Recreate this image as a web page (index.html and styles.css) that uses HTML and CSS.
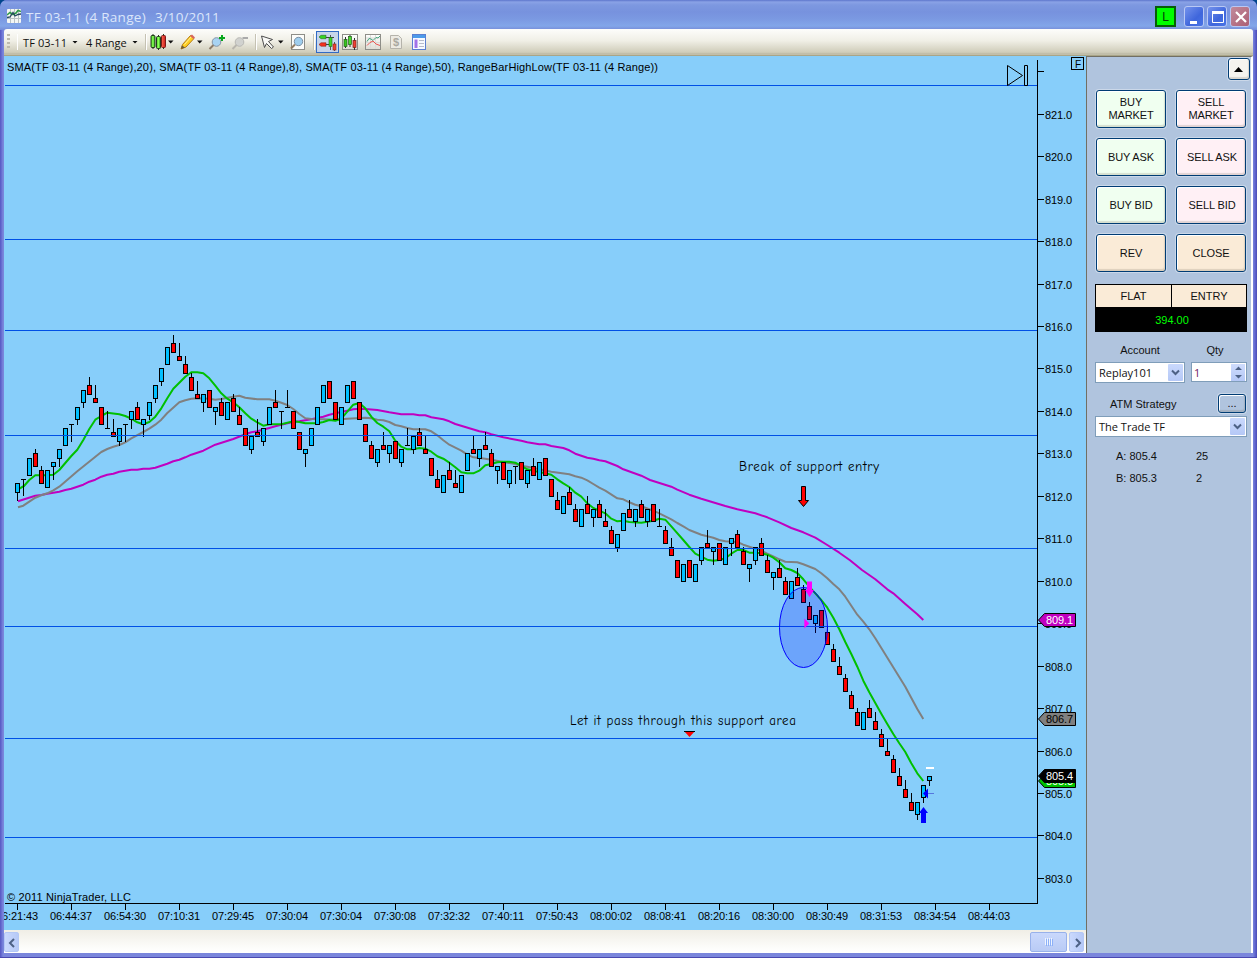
FILE: index.html
```html
<!DOCTYPE html>
<html lang="en">
<head>
<meta charset="utf-8">
<title>TF 03-11 (4 Range) 3/10/2011</title>
<link rel="stylesheet" href="styles.css">
</head>
<body>
<div class="window">
  <header class="titlebar">
    <svg class="app-icon" width="14" height="14" viewBox="0 0 14 14"><rect width="14" height="14" rx="1" fill="#f4f6f4"/><path d="M0 9.500H14M3.500 0V14M7.500 0V14M11.500 0V14" stroke="#b9c2c4"/><path d="M0 6L3 3.500L6 5.500L9 4L11 1.500L14 2.500" fill="none" stroke="#2e9a48" stroke-width="1.600"/><path d="M0 8.500L3 8L6 3.500L8 7L11 5.500L14 5" fill="none" stroke="#24485e" stroke-width="1.300"/></svg>
    <h1 class="title"><span>TF 03-11 (4 Range)</span><span>3/10/2011</span></h1>
    <span class="link-badge">L</span>
    <div class="win-buttons">
      <button class="win-btn"><svg width="20" height="20"><path d="M5 15.500H12" stroke="#fff" stroke-width="3"/></svg></button>
      <button class="win-btn"><svg width="20" height="20"><path d="M4.500 5V15.500H15.500V5" fill="none" stroke="#fff"/><path d="M4 5.500H16" stroke="#fff" stroke-width="3"/></svg></button>
      <button class="win-btn win-close"><svg width="20" height="20"><path d="M5 5L15 15M15 5L5 15" stroke="#fff" stroke-width="2.200"/></svg></button>
    </div>
  </header>

  <nav class="toolbar">
    <span class="grip"></span>
    <span class="sep"></span>
    <span class="pick pick-symbol">TF 03-11</span><i class="caret"></i>
    <span class="pick pick-range">4 Range</span><i class="caret"></i>
    <svg class="tools" width="290" height="24" viewBox="144 0 290 24">
      <defs>
        <linearGradient id="greenBar"><stop offset="0" stop-color="#3fd01f"/><stop offset=".5" stop-color="#8cff58"/><stop offset="1" stop-color="#1c9a10"/></linearGradient>
        <linearGradient id="redBar"><stop offset="0" stop-color="#ff6a50"/><stop offset="1" stop-color="#c81a1a"/></linearGradient>
        <linearGradient id="frame" x2="0" y2="1"><stop offset="0" stop-color="#fff"/><stop offset="1" stop-color="#deddd4"/></linearGradient>
      </defs>
      <path d="M146.500 4V20M256.500 4V20M314.500 4V20" stroke="#fff"/><path d="M145.500 4V20M255.500 4V20M313.500 4V20" stroke="#c5c2b3"/>
      <g stroke="#233a1c"><path d="M153 4V19M158.500 5V20M163.500 4V19"/><rect x="151" y="5.500" width="4" height="12" rx="1" fill="url(#greenBar)"/><rect x="156.500" y="6.500" width="4" height="12" rx="1" fill="url(#greenBar)"/><rect x="161.500" y="5.500" width="4" height="12" rx="1" fill="url(#redBar)" stroke="#7a1b17"/></g>
      <g fill="#111"><path d="M168 10.500H173.500L170.700 13.500ZM197 10.500H202.500L199.700 13.500ZM278 10.500H283.500L280.700 13.500Z"/></g>
      <path d="M181 19L182.500 14.500L190.500 5.500L194 8.500L186 17Z" fill="#ffcf23" stroke="#b37a12"/><path d="M190 6L192 4.500L195 7.500L193.500 9Z" fill="#d9665d"/><path d="M181 19L182 15.500L185 17.500Z" fill="#6a5b3d"/><path d="M184.500 14.500L191 7" stroke="#fff29a"/>
      <path d="M209.500 19L214 14.500" stroke="#8d7c68" stroke-width="2"/><circle cx="216.500" cy="12" r="4.300" fill="#a8d3f2" stroke="#8695a5"/><path d="M222 5V11M219 8H225" stroke="#08a71c" stroke-width="2"/>
      <path d="M232.500 19L237 14.500" stroke="#b8b5ad" stroke-width="2"/><circle cx="239.500" cy="12" r="4.300" fill="#d1d2cf" stroke="#b8b8b4"/><path d="M242.500 8H248" stroke="#aaa" stroke-width="2"/>
      <path d="M261.500 6L272.500 9.500L268.500 11.500L273.500 17L271.500 18.500L266.500 13.500L264.500 17.500Z" fill="#f8f8f5" stroke="#4d4d4d"/>
      <rect x="291.500" y="4.500" width="13" height="15" fill="#fcfcfa" stroke="#8e8e88"/><path d="M291 18.500L295 14.500" stroke="#927c62" stroke-width="2"/><circle cx="298.500" cy="11.500" r="4.200" fill="#9fceee" stroke="#7c91a5"/>
      <rect x="316.500" y="1.500" width="22" height="21" fill="#c7d5ea" stroke="#316ac5"/>
      <g stroke-width=".6"><path d="M319 7L321 5.300H326V8.700H321Z" fill="#36d322" stroke="#276e20"/><path d="M326 7.500H334" stroke="#404040" stroke-width="1"/><path d="M319 14.500L321 12.800H326V16.200H321Z" fill="#f8301e" stroke="#8b2017"/><path d="M326 14.500H330" stroke="#404040" stroke-width="1"/><path d="M330.500 5V20M334.500 12V21" stroke="#333" stroke-width=".8"/><rect x="329" y="7.500" width="3" height="9" fill="#3ed62a" stroke="#226e1b"/><rect x="333" y="14" width="3" height="6" fill="#ee4332" stroke="#8b2017"/></g>
      <rect x="342.500" y="4.500" width="15" height="15" fill="url(#frame)" stroke="#8e8e88"/><path d="M345.500 7V18M350 5V17M354.500 8V20" stroke="#333"/><rect x="344" y="9.500" width="3" height="7" fill="#39c421" stroke="#235f18" stroke-width=".7"/><rect x="348.500" y="6.500" width="3" height="8" fill="#48dc2e" stroke="#235f18" stroke-width=".7"/><rect x="353" y="10.500" width="3" height="7" fill="#ef4334" stroke="#762018" stroke-width=".7"/>
      <rect x="365.500" y="4.500" width="15" height="15" fill="url(#frame)" stroke="#8e8e88"/><path d="M366 8H380M366 12.500H380M370.500 5V19M375.500 5V19" stroke="#dcdcd8"/><path d="M367 11.500L369 8.500L371 9L373 10.500L376 7.500L378 8L380 6" fill="none" stroke="#3fa27c"/><path d="M367 15.500L370 12.500L373 11L376 14L380 15.500" fill="none" stroke="#ec5550"/>
      <path d="M390.500 5.500H398.500L401.500 8.500V18.500H390.500Z" fill="#eceae3" stroke="#b5b3ab"/><text x="393" y="16" font-size="11" font-weight="bold" fill="#aaa8a0">$</text>
      <rect x="412.500" y="4.500" width="13" height="15" fill="#f7faff" stroke="#5b7fd0"/><path d="M413 6.500H425" stroke="#4d9bea" stroke-width="3"/><path d="M416 9.500V18" stroke="#a273e8" stroke-width="3"/><path d="M419 10.500H424M419 13.500H424M419 16.500H424" stroke="#b7bccb"/>
    </svg>
  </nav>

  <main class="content">
    <section class="chart-pane">
      <svg id="chart" class="chart" width="1081" height="874" viewBox="4 56 1081 874"></svg>
      <div class="scrollbar">
        <button class="scroll-btn"><svg width="15" height="20"><path d="M9 6L5 10L9 14" fill="none" stroke="#4d6185" stroke-width="2"/></svg></button>
        <span class="scroll-track"></span>
        <span class="scroll-thumb"><i></i><i></i><i></i><i></i></span>
        <button class="scroll-btn"><svg width="15" height="20"><path d="M6 6L10 10L6 14" fill="none" stroke="#4d6185" stroke-width="2"/></svg></button>
      </div>
    </section>

    <aside class="panel">
      <div class="panel-top"><button class="xp-btn collapse"><svg width="10" height="5"><path d="M0 5L4.500 0L9 5Z"/></svg></button></div>
      <div class="orders">
        <button class="xp-btn buy">BUY<br>MARKET</button><button class="xp-btn sell">SELL<br>MARKET</button>
        <button class="xp-btn buy">BUY ASK</button><button class="xp-btn sell">SELL ASK</button>
        <button class="xp-btn buy">BUY BID</button><button class="xp-btn sell">SELL BID</button>
        <button class="xp-btn neutral">REV</button><button class="xp-btn neutral">CLOSE</button>
      </div>
      <div class="position">
        <span class="pos-cell">FLAT</span><span class="pos-cell">ENTRY</span>
        <span class="pnl">394.00</span>
      </div>
      <div class="labels"><span>Account</span><span>Qty</span></div>
      <div class="account-row">
        <div class="combo account">Replay101<span class="drop"><svg width="9" height="7"><path d="M1 1.500L4.500 5L8 1.500" fill="none" stroke="#4d6185" stroke-width="2"/></svg></span></div>
        <div class="combo qty">1<span class="spin"><svg width="7" height="15"><path d="M0 5L3.500 1.500L7 5ZM0 10L3.500 13.500L7 10Z" fill="#4d6185"/></svg></span></div>
      </div>
      <div class="atm-row"><span>ATM Strategy</span><button class="xp-btn more">...</button></div>
      <div class="combo strategy">The Trade TF<span class="drop"><svg width="9" height="7"><path d="M1 1.500L4.500 5L8 1.500" fill="none" stroke="#4d6185" stroke-width="2"/></svg></span></div>
      <div class="quotes"><span>A: 805.4</span><span>25</span><span>B: 805.3</span><span>2</span></div>
    </aside>
  </main>
</div>
<script src="chart.js"></script>
</body>
</html>
```

FILE: styles.css
```css
* { box-sizing: border-box; }
body { margin: 0; background: #00458c; font: 11px "Liberation Sans", Arial, sans-serif; color: #111; overflow: hidden; }
button { font: inherit; color: inherit; padding: 0; margin: 0; }
svg { display: block; }

.window {
  width: 1257px; height: 958px; display: flex; flex-direction: column;
  padding: 0 4px 4px; border-radius: 7px 7px 0 0;
  background: linear-gradient(90deg, #5658c0 0, #6064cc 1px, #7a86dc 3px, #7a86dc 4px, #7a86dc 1253px, #6066d0 1255px, #4a4cb4 1257px);
  border-bottom: 1px solid #4a48b0;
}

.titlebar {
  height: 30px; margin: 0 -4px; padding: 3px 7px 0 7px; display: flex; align-items: center;
  border-radius: 7px 7px 0 0;
  background: linear-gradient(#5d76cc 0, #8aa2e6 2px, #7d98e0 5px, #7792de 12px, #7b99e2 19px, #82a6e9 26px, #7c98e0 28px, #728cd8 30px);
}
.app-icon { margin: -1px 5px 0 0; }
.title { margin: 1px 0 0; display: flex; gap: 9px; flex: 1; font: 500 13.500px "Open Sans", sans-serif; color: #dbe6fb; }
.title span:first-child { width: 120px; letter-spacing: .28px; white-space: nowrap; }
.title span:last-child { letter-spacing: .1px; }
.link-badge { width: 21px; height: 21px; border: 2px solid #075d07; background: #0f0; display: grid; place-items: center; margin-right: 8px; color: #063b06; font-size: 12px; }
.win-buttons { display: flex; gap: 3px; }
.win-btn { width: 20px; height: 21px; border: 1px solid #b9c8f4; border-radius: 3px; background: linear-gradient(135deg, #7593ec, #3f66dc 60%, #4974e6); display: grid; place-items: center; overflow: hidden; }
.win-close { background: linear-gradient(135deg, #c18a9c, #ac5f74); }

.toolbar {
  height: 26px; display: flex; align-items: center; padding-left: 3px;
  background: linear-gradient(#fdfdfb, #f0efe6 45%, #cfccb9 90%, #c1beaa 92%);
  border-bottom: 1px solid #a9a587; border-radius: 3px 3px 0 0;
  font: 11px "Open Sans", Tahoma, sans-serif;
}
.grip { width: 3px; height: 16px; background: repeating-linear-gradient(#bdbaad 0 2px, transparent 2px 4px); }
.sep { width: 1px; height: 16px; margin: 0 5px 0 7px; background: #fff; }
.pick { white-space: nowrap; }
.pick-symbol { width: 44px; margin-right: 5px; letter-spacing: .1px; }
.pick-range { width: 40px; margin: 0 6px 0 8px; letter-spacing: -.05px; }
.caret { width: 6px; height: 3px; background: #111; clip-path: polygon(0 0, 100% 0, 50% 100%); }
.tools { margin-left: 6px; font-family: "Liberation Sans", sans-serif; }

.content { flex: 1; display: flex; }
.chart-pane { width: 1082px; display: flex; flex-direction: column; background: #87cefa; }
.chart text { font-family: "Liberation Sans", Arial, sans-serif; font-size: 11px; }
.chart .note { font-family: "Comic Sans MS", "Comic Neue", "Open Sans", sans-serif; font-size: 13px; }
.titlebar + .toolbar { margin-bottom: 0; height: 27px; flex: none; margin-top: -1px; }
.titlebar { height: 30px; flex: none; }

.scrollbar { height: 23px; display: flex; align-items: center; gap: 2px; padding: 0 2px 0 0; background: linear-gradient(#f0eee6, #fdfdfb 80%, #fff); }
.scroll-btn { width: 15px; height: 20px; border: 1px solid #b4c8f6; border-radius: 2px; background: linear-gradient(90deg, #cad9fd, #b6c9f7); display: grid; place-items: center; overflow: hidden; }
.scroll-track { flex: 1; }
.scroll-thumb { width: 37px; height: 20px; border: 1px solid #98b1ea; border-radius: 2px; background: linear-gradient(#c9d8fc, #b9cbf5); display: flex; align-items: center; justify-content: center; gap: 1px; }
.scroll-thumb i { width: 1px; height: 7px; background: #eef4fe; box-shadow: 1px 1px #8cb0f8; }

.panel { width: 167px; background: #b0c4de; border-left: 1px solid #716f64; border-top: 1px solid #716f64; border-right: 2px solid #fff; padding-left: 8px; }
.xp-btn { border: 1px solid #003c74; border-radius: 3px; background: #f5f4ef; box-shadow: 0 0 0 1px rgba(255,255,255,.35), inset -1px -2px 1px rgba(120,110,90,.22), inset 1px 1px #fff; letter-spacing: -.1px; }
.panel-top { display: flex; justify-content: flex-end; padding: 1px 1px 0 0; }
.collapse { width: 22px; height: 22px; display: grid; place-items: center; }
.orders { display: grid; grid-template-columns: 70px 70px; grid-auto-rows: 38px; gap: 10px; padding: 10px 0 0 1px; line-height: 13px; }
.buy { background: #f0fff0; }
.sell { background: #fff0f5; padding-left: 2px; }
.orders .sell:nth-child(2), .orders .neutral { padding-left: 0; }
.neutral { background: #faebd7; }
.position { width: 152px; height: 48px; margin-top: 12px; display: grid; grid-template-columns: 75px 74px; grid-template-rows: 22px 24px; column-gap: 1px; padding: 1px; background: #000; }
.pos-cell { background: #faebd7; display: grid; place-items: center; }
.pnl { grid-column: 1 / 3; display: grid; place-items: center; padding: 2px 0 0 2px; color: #0f0; }
.labels { display: grid; grid-template-columns: 90px 60px; text-align: center; height: 30px; align-items: center; padding-top: 6px; }
.account-row { display: flex; gap: 6px; width: 152px; }
.combo { height: 21px; border: 1px solid #7f9db9; background: #fff; display: flex; align-items: center; justify-content: space-between; padding: 0 1px 0 3px; font: 11px "Open Sans", Tahoma, sans-serif; }
.account { width: 90px; }
.qty { width: 56px; height: 20px; padding-left: 2px; color: #702060; }
.drop { width: 15px; height: 17px; border-radius: 1px; background: linear-gradient(#cad9fd, #b5c8f6); display: grid; place-items: center; }
.spin { width: 14px; height: 17px; background: linear-gradient(#cedcfd, #b5c8f6); display: grid; place-items: center; }
.atm-row { width: 151px; height: 33px; display: flex; align-items: center; justify-content: space-between; padding: 9px 0 0 15px; }
.more { width: 28px; height: 19px; background: #b0c4de; margin-bottom: 2px; }
.strategy { width: 152px; }
.quotes { display: grid; grid-template-columns: 80px 60px; grid-auto-rows: 22px; align-items: center; padding: 8px 0 0 21px; }
```

FILE: chart.js
```js
const NS = 'http://www.w3.org/2000/svg';
const chart = document.getElementById('chart');

function add(tag, attrs, text) {
  const el = document.createElementNS(NS, tag);
  for (const k in attrs) el.setAttribute(k, attrs[k]);
  if (text !== undefined) el.textContent = text;
  chart.appendChild(el);
  return el;
}

/* Averages: each segment has an origin, then x,y pairs in thirds of a pixel. */
const averages = {
  '#c000c0': [
    [0, 320, '54,544 106,527 124,525 142,521 160,518 178,515 196,510 214,506 232,500 250,494 268,485 286,479 304,470 322,464 340,461 358,455 394,449 412,449 430,446 448,446 466,443 502,431 520,424 538,419 556,412 574,404 610,392 646,374 700,357'],
    [240, 360, '16,223 34,217 52,214 88,204 106,199 142,190 160,186 178,184 214,178 250,170 268,164 286,160 322,152 340,148 358,146 376,147 412,150 448,157 484,163 520,163 538,166 556,166 574,172 610,178'],
    [440, 420, '28,4 46,12 118,34 136,37 154,43 190,52 244,62 262,67 298,73 316,73 334,78 370,84 388,91 406,101 442,113 460,116 478,121 496,124 532,138 550,148 604,167 622,176'],
    [650, 450, '0,90 64,110 82,119 118,134 154,146 226,168 262,178 316,190 352,202 388,217 424,234 460,247 496,263 532,285 568,308 600,331'],
    [780, 570, '246,0 286,28 322,58 340,70 376,102 412,133 430,150']],
  '#808080': [
    [0, 320, '54,562 70,557 88,545 106,533 124,526 142,520 160,511 178,500 232,454 304,396 322,387 340,380 358,375 376,367 394,355 430,336 448,326 466,314 484,299 502,279 538,247 556,241 574,236 592,235 628,236 646,239 664,237 682,233 700,230 718,227'],
    [240, 360, '16,113 52,118 88,118 106,122 124,128 142,135 160,147 178,162 196,175 214,177 250,178 286,179 322,176 376,173 394,175 412,179 430,181 448,186 466,195 484,199 502,204 520,208 556,208 574,214 592,226 610,241 628,254 646,263 664,272 682,284'],
    [440, 420, '100,112 136,116 154,119 190,126 226,132 244,137 262,140 298,148 334,155 388,163 406,169 424,173 442,181 460,192 478,203 496,212 532,235 550,238 568,247 586,254 604,259'],
    [650, 450, '10,182 28,190 46,199 64,208 82,219 100,229 118,240 154,254 172,259 190,263 208,270 226,274 262,276 280,284 298,290 316,296 334,302 352,311 370,319 388,328 406,335 442,337 460,343 496,357'],
    [780, 570, '124,10 142,25 160,42 178,58 196,80 214,107 232,134 250,155 268,178 286,205 376,350 412,417 430,447']],
  '#00c000': [
    [0, 320, '54,508 72,498 88,480 106,466 124,466 142,466 160,464 178,450 214,408 232,389 250,360 268,327 286,299 304,288 322,278 358,283 376,288 394,296 412,307 430,313 448,306 466,290 484,265 502,235 520,206 538,188 556,170 574,157 592,157 610,160 628,175 646,197 664,220 682,236 700,247 718,262'],
    [240, 360, '16,160 34,176 52,187 70,197 88,193 124,193 142,188 160,184 178,186 196,190 232,190 250,186 268,180 286,182 304,176 322,155 340,134 358,129 376,145 394,170 412,189 430,200 448,214 466,242 484,260 502,268 520,268 538,264 556,266 574,275 592,289'],
    [440, 420, '10,116 28,128 46,142 64,157 82,160 100,160 118,152 136,136 154,132 172,127 190,125 208,125 226,128 244,138 262,148 280,152 298,156 316,160 334,164 352,178 370,190 388,201 406,218 424,230 442,250 460,264 478,272 496,280 514,296 532,304 550,302 568,306 604,308 622,305 640,302'],
    [650, 450, '28,206 46,209 64,229 100,270 118,291 136,311 154,320 172,329 190,332 208,330 226,325 244,311 262,300 280,300 298,308 316,308 334,310 352,314 370,323 388,337 406,355 424,360 442,369 460,388'],
    [780, 570, '88,50 106,70 124,90 142,113 160,143 178,178 196,216 214,252 232,290 250,332 268,367 286,399 304,431 322,462 340,492 358,520 376,546 394,580 412,610 430,633']]
};

/* Bars: b = up (top, bottom, low), r = down (top, bottom, high),
   t / u = flat bar with a wick below / above. Vertical units are thirds of a pixel. */
const bars = [
  [0, 320, 'b490,518,542 t478,529 b414,467 r399,440,387 r450,491,438 b450,503 b426,440,479 b387,416,440 b324,377 t313,365 b261,299,314 b210,248,263 r195,224,171 r234,248,195 r261,314 u325,273 r336,350,297 b324,365,377 t313,365 b273,299,326 r261,299,246 b297,314,350 b246,287,299 b195,236,248 b144,185,197 b81,134 r69,98,45 r108,122,69 r132,161,108 r171,212,159 r222,236,183 b222,248,275 r210,263 b261,275,314 r246,287,234 b246,299 r234,275,222 r285,314,261 r324,377 b348,389,401'],
  [40, 360, 'r216,230,177 b204,245,257 b141,194 r126,143,90 t154,206 u142,90 r153,206 r216,269 b267,281,320 b204,257 b141,194 b75,128 r63,116 r126,179 b141,194 b75,128 r63,116 r126,179 r192,245 r255,296,243 b267,308,320 r255,269,216 b255,281,308 r243,296 b267,308,320 u256,204 b228,269,281 r216,257,204 r267,281,228 r294,347 r357,383,330 b345,398 r330,359,306 r369,383,330 b345,398'],
  [75, 420, 'b99,152 r87,101,48 b87,116,140 r75,89,36 r99,140,87 b138,152,191 r126,179 b150,191,203 t139,191 r126,179 b150,191,203 r138,167,114 b126,179 r114,167 r177,230 r240,269,216 b228,281 r216,254,201 r267,305,252 b267,320 r252,281,228 b267,293,320 r252,293,240 r303,320,267 r330,371,318 b342,383,395 b279,332 r267,293,240 b267,305,320 r252,293,240 b267,305,320'],
  [106, 450, 'r162,215 u229,177 r240,281,228 r291,317,264 r330,383 b342,395 r330,383 b342,395 b291,332,344 r279,293,240 b291,305,344 r279,332 b291,344 b264,281,318 r252,293,240 r303,344,291 b342,356,395 b291,332,344 r279,317,264 r330,368,315 b366,383,419 r354,383,330 r393,434,381 b393,446 r381,407,354 r417,458,405 r468,509,456 b495,521,548 r480,533'],
  [135, 570, 'r186,224,171 r237,275,222 r288,314,261 r324,365,312 r375,416,363 r426,467,414 b426,479 r414,443,390 r453,479,426 r492,530,477 r543,557,507 r567,608,555 r618,647,594 r657,683,630 r696,722,669 b696,734,749 b645,683,698 b618,632,647']
];

for (const color in averages) {
  const pts = averages[color].flatMap(([ox, oy, s]) => s.split(' ').map(p => {
    const [x, y] = p.split(',').map(Number);
    return (ox + x / 3).toFixed(1) + ',' + (oy + y / 3).toFixed(1);
  }));
  add('polyline', { points: pts.join(' '), fill: 'none', stroke: color, 'stroke-width': 2, 'stroke-linejoin': 'round' });
}

for (const [first, top, list] of bars) {
  list.split(' ').forEach((bar, n) => {
    const x = 17 + (first + n) * 6;
    const v = bar.slice(1).split(',').map(q => top + Math.round(q / 3));
    const kind = bar[0];
    if (kind === 't' || kind === 'u') {
      const y = top + Math.floor(bar.slice(1).split(',')[0] / 3);
      add('rect', { x: x - 2, y, width: 5, height: 1 });
      add('rect', { x, y: Math.min(y, v[1]), width: 1, height: Math.abs(v[1] - y) });
      return;
    }
    if (v[2] !== undefined) {
      const y = kind === 'b' ? v[1] : v[2];
      add('rect', { x, y, width: 1, height: kind === 'b' ? v[2] - v[1] : v[0] - v[2] });
    }
    add('rect', { x: x - 1.5, y: v[0] + 0.5, width: 4, height: v[1] - v[0] - 1, fill: kind === 'b' ? '#00bfff' : '#f00', stroke: '#000' });
  });
}

for (const y of [85, 239, 330, 435, 548, 626, 738, 837])
  add('rect', { x: 5, y, width: 1032, height: 1, fill: '#0050e6' });

/* Price axis */
add('rect', { x: 1037, y: 60, width: 1, height: 844 });
add('rect', { x: 1038, y: 71, width: 6, height: 1 });
[114, 156, 199, 241, 284, 326, 368, 411, 453, 496, 538, 581, 623, 666, 708, 751, 793, 835, 878].forEach((y, i) => {
  add('rect', { x: 1038, y, width: 6, height: 1 });
  add('text', { x: 1045, y: y + 5, textLength: 27 }, (821 - i).toFixed(1));
});

/* Time axis */
add('rect', { x: 5, y: 903, width: 1033, height: 1 });
['06:21:43', '06:44:37', '06:54:30', '07:10:31', '07:29:45', '07:30:04', '07:30:04', '07:30:08', '07:32:32', '07:40:11', '07:50:43', '08:00:02', '08:08:41', '08:20:16', '08:30:00', '08:30:49', '08:31:53', '08:34:54', '08:44:03'].forEach((t, i) => {
  const x = 17 + 54 * i;
  add('rect', { x, y: 903, width: 1, height: 7 });
  add('text', { x: x - 21, y: 920, textLength: 42 }, t);
});

/* Price markers */
function marker(y, label, fill, color) {
  add('path', { d: `M1038.5 ${y}L1044.500 ${y - 6.5}H1075.500V${y + 6.5}H1044.500Z`, fill, stroke: '#000' });
  add('text', { x: 1046, y: y + 4, fill: color, textLength: 27 }, label);
}
marker(620, '809.1', '#c000c0', '#fff');
marker(719, '806.7', '#808080', '#000');
marker(781, '805.3', '#00c000', '#fff');
marker(776, '805.4', '#000', '#fff');

/* Trade and drawing objects */
add('ellipse', { cx: 803.5, cy: 627.5, rx: 24, ry: 40, fill: '#0000ff', 'fill-opacity': 0.2, stroke: '#0000ff' });
add('path', { d: 'M801.500 486.500H805.500V500.500H808.500L803.500 506.500L798.500 500.500H801.500Z', fill: '#f00', stroke: '#000' });
add('path', { d: 'M684 731H695L689.500 737Z', fill: '#f00' });
add('path', { d: 'M684 731.500H695', stroke: '#000' });
add('path', { d: 'M807 581.500H812V590H814L809.500 597L805 590H807Z', fill: '#f0f' });
add('path', { d: 'M804.300 618.500L809.300 623.500L804.300 628.500Z', fill: '#f0f' });
add('path', { d: 'M921 823H926V813H928L923.500 807L919 813H921Z', fill: '#00f' });
add('path', { d: 'M923 793.500L928 788.500V798.500Z', fill: '#00f' });
add('rect', { x: 928, y: 793, width: 6, height: 1, fill: '#5577dd' });
add('rect', { x: 926, y: 767, width: 8, height: 2, fill: '#fff' });
add('text', { x: 739, y: 471, textLength: 140, class: 'note' }, 'Break of support entry');
add('text', { x: 570, y: 725, textLength: 226, class: 'note' }, 'Let it pass through this support area');

/* Captions and corner controls */
add('text', { x: 7, y: 71, textLength: 651 }, 'SMA(TF 03-11 (4 Range),20), SMA(TF 03-11 (4 Range),8), SMA(TF 03-11 (4 Range),50), RangeBarHighLow(TF 03-11 (4 Range))');
add('text', { x: 7, y: 901, textLength: 124 }, '© 2011 NinjaTrader, LLC');
add('path', { d: 'M1007.500 65.500L1022.500 75.500L1007.500 85.500ZM1024.500 65.500H1027.500V85.500H1024.500Z', fill: 'none', stroke: '#000' });
add('rect', { x: 1071.5, y: 57.5, width: 12, height: 12, fill: 'none', stroke: '#000' });
add('text', { x: 1075, y: 68, style: 'font-size:10px' }, 'F');
```
